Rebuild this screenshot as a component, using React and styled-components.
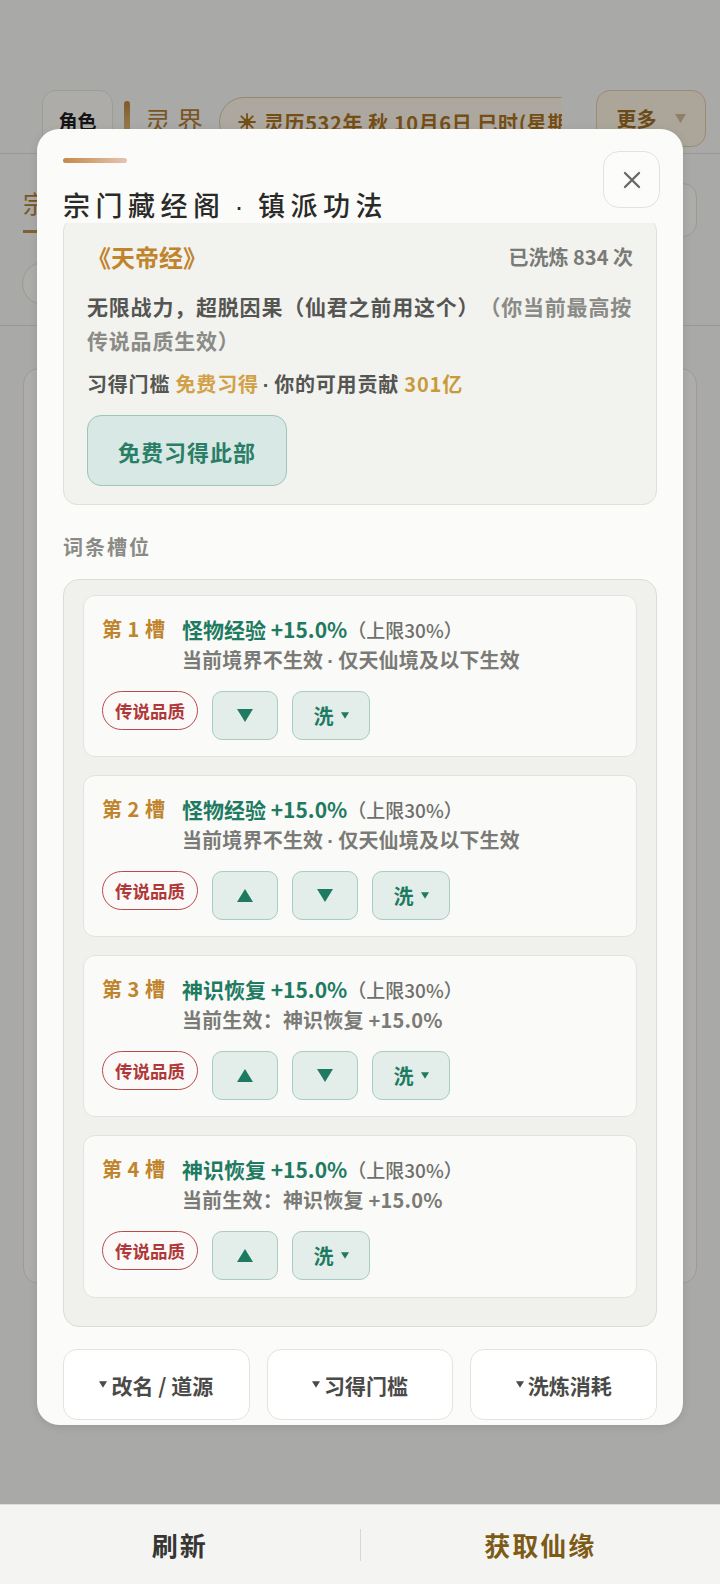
import React from "react";
import styled, { createGlobalStyle } from "styled-components";

const GlobalStyle = createGlobalStyle`
  html, body {
    margin: 0;
    padding: 0;
    background: #f2f2ef;
  }
  body {
    font-family: "Noto Sans CJK SC", "Noto Sans", sans-serif;
  }
  * {
    box-sizing: border-box;
  }
`;

const Page = styled.div`
  position: relative;
  height: 1584px;
  display: flex;
  flex-direction: column;
  overflow: hidden;
`;

/* ---------- page behind the dialog ---------- */

const TopBar = styled.div`
  height: 154px;
  display: flex;
  align-items: flex-start;
  padding: 90px 0 0 42px;
  border-bottom: 1px solid #dcdad4;
  flex-shrink: 0;
`;

const RoleButton = styled.div`
  width: 71px;
  height: 60px;
  border: 1px solid #e2e0da;
  border-radius: 14px;
  background: #f8f7f3;
  display: flex;
  align-items: center;
  justify-content: center;
  font-size: 19px;
  font-weight: 700;
  color: #1e1e1e;
`;

const GoldBar = styled.div`
  width: 6px;
  height: 40px;
  margin: 11px 0 0 11px;
  border-radius: 3px;
  background: linear-gradient(180deg, #b98238, #e4c48e);
`;

const RealmTitle = styled.div`
  margin: 14px 0 0 15px;
  font-size: 26px;
  line-height: 32px;
  letter-spacing: 6px;
  color: #b07a30;
`;

const DateClip = styled.div`
  width: 343px;
  margin: 7px 0 0 10px;
  overflow: hidden;
`;

const DatePill = styled.div`
  display: inline-flex;
  align-items: center;
  gap: 8px;
  height: 50px;
  padding: 0 22px 0 18px;
  border: 1.5px solid #d8c29c;
  border-radius: 26px;
  background: #f7f1e6;
  white-space: nowrap;
  font-size: 20px;
  font-weight: 700;
  letter-spacing: 0.6px;
  color: #a8701f;
`;

const MoreButton = styled.div`
  width: 110px;
  height: 57px;
  margin-left: 34px;
  border: 1.5px solid #dcc9a4;
  border-radius: 14px;
  background: #f6eedd;
  display: flex;
  align-items: center;
  justify-content: center;
  gap: 18px;
  font-size: 20px;
  font-weight: 700;
  color: #9a6a22;
`;

const TabRow = styled.div`
  height: 86px;
  display: flex;
  justify-content: space-between;
  align-items: flex-start;
  padding: 0 23px;
  flex-shrink: 0;
`;

const TabLabel = styled.div`
  margin-top: 32px;
  padding-bottom: 10px;
  font-size: 24px;
  line-height: 34px;
  color: #b07a30;
  border-bottom: 3px solid #b98a4a;
`;

const SearchBox = styled.div`
  width: 60px;
  height: 54px;
  margin-top: 29px;
  border: 1px solid #dedcd6;
  border-radius: 14px;
  background: #f7f6f2;
`;

const FilterRow = styled.div`
  height: 86px;
  padding: 22px 22px 0;
  border-bottom: 1px solid #dcdad4;
  flex-shrink: 0;
`;

const FilterPill = styled.div`
  width: 120px;
  height: 43px;
  border: 1px solid #dcdad4;
  border-radius: 22px;
  background: #f7f6f2;
`;

const BackCard = styled.div`
  height: 916px;
  margin: 42px 23px 0;
  border: 1px solid #e0ded8;
  border-radius: 16px;
  background: #f9f8f5;
  flex-shrink: 0;
`;

const Overlay = styled.div`
  position: absolute;
  top: 0;
  left: 0;
  right: 0;
  bottom: 80px;
  background: rgba(0, 0, 0, 0.3);
  z-index: 1;
`;

const BottomBar = styled.div`
  position: relative;
  z-index: 2;
  margin-top: auto;
  height: 80px;
  display: flex;
  align-items: center;
  background: #f4f5f3;
  border-top: 1px solid #deded9;
`;

const BarItem = styled.div`
  flex: 1;
  text-align: center;
  font-size: 26px;
  font-weight: 700;
  letter-spacing: 2px;
  color: ${(p) => (p.$accent ? "#7d5a16" : "#363634")};
`;

const BarDivider = styled.div`
  width: 1px;
  height: 32px;
  background: #d8d8d3;
`;

/* ---------- dialog ---------- */

const Modal = styled.div`
  position: absolute;
  z-index: 3;
  top: 129px;
  left: 37px;
  width: 646px;
  height: 1296px;
  display: flex;
  flex-direction: column;
  padding: 22px 26px 5px;
  background: #fbfbf9;
  border-radius: 22px;
  box-shadow: 0 2px 8px rgba(0, 0, 0, 0.1);
  overflow: hidden;
`;

const ModalHeader = styled.div`
  display: flex;
  justify-content: space-between;
  align-items: flex-start;
  flex-shrink: 0;
`;

const HeaderText = styled.div`
  padding-top: 7px;
`;

const Accent = styled.div`
  width: 64px;
  height: 5px;
  border-radius: 3px;
  background: linear-gradient(90deg, #c48a46, #e6c4b4);
`;

const Title = styled.div`
  margin-top: 24px;
  height: 36px;
  font-size: 27px;
  line-height: 36px;
  font-weight: 500;
  letter-spacing: 5.5px;
  color: #2a2a28;
`;

/* narrow latin middle dot used as a separator */
const Dot = styled.span`
  font-family: "Liberation Sans", sans-serif;
  line-height: 0;
  margin: 0 ${(p) => p.$gap || 4}px;
`;

const CloseButton = styled.div`
  width: 57px;
  height: 57px;
  margin-right: -3px;
  border: 1.5px solid #e2e2de;
  border-radius: 16px;
  background: #fcfcfa;
  display: flex;
  align-items: center;
  justify-content: center;
`;

const ModalBody = styled.div`
  flex: 1;
  overflow: hidden;
  display: flex;
  flex-direction: column;
`;

const InfoCard = styled.div`
  margin-top: -6px;
  padding: 24px 23px 18px;
  background: #f2f2ef;
  border: 1px solid #e0e0db;
  border-radius: 14px;
  flex-shrink: 0;
`;

const InfoHead = styled.div`
  display: flex;
  justify-content: space-between;
  align-items: center;
  height: 30px;
`;

const BookName = styled.div`
  font-size: 24px;
  line-height: 30px;
  font-weight: 700;
  color: #c0842c;
`;

const RefineCount = styled.div`
  font-size: 20px;
  line-height: 30px;
  font-weight: 700;
  color: #7a7a76;
`;

const Desc = styled.div`
  margin-top: 17px;
  font-size: 21px;
  line-height: 34px;
  font-weight: 700;
  letter-spacing: 0.8px;
  color: #555552;
  text-spacing-trim: space-all;
`;

const Muted = styled.span`
  color: #8a8a86;
`;

const Threshold = styled.div`
  margin-top: 12px;
  height: 30px;
  font-size: 20px;
  line-height: 30px;
  font-weight: 700;
  letter-spacing: 0.8px;
  color: #555552;
`;

const Gold = styled.span`
  color: ${(p) => p.$tone || "#d2a046"};
`;

const LearnButton = styled.div`
  margin-top: 16px;
  width: 200px;
  height: 71px;
  border: 1.5px solid #9cc6bc;
  border-radius: 14px;
  background: #d8e8e4;
  display: flex;
  align-items: center;
  justify-content: center;
  font-size: 22px;
  font-weight: 700;
  letter-spacing: 1px;
  color: #2a7e67;
`;

const SectionLabel = styled.div`
  margin-top: 27px;
  font-size: 20px;
  line-height: 30px;
  font-weight: 700;
  letter-spacing: 2px;
  color: #8a8a86;
  flex-shrink: 0;
`;

const SlotList = styled.div`
  margin-top: 17px;
  padding: 15px 19px 28px;
  display: flex;
  flex-direction: column;
  gap: 18px;
  background: #f0f0ed;
  border: 1px solid #dcdcd7;
  border-radius: 16px;
  flex-shrink: 0;
`;

const SlotCard = styled.div`
  height: ${(p) => p.$h}px;
  padding: 18px 18px 0;
  background: #fafaf8;
  border: 1px solid #e2e2de;
  border-radius: 12px;
`;

const SlotMain = styled.div`
  display: flex;
  gap: 17px;
`;

const SlotLabel = styled.div`
  font-size: 20px;
  line-height: 30px;
  font-weight: 700;
  word-spacing: 1px;
  color: #c0842c;
  white-space: nowrap;
`;

const SlotName = styled.div`
  font-size: 21px;
  line-height: 30px;
  font-weight: 700;
  color: #1f7a62;
  white-space: nowrap;
  text-spacing-trim: space-all;
`;

const SlotCap = styled.span`
  font-size: 19px;
  font-weight: 500;
  color: #6f6f6b;
`;

const SlotNote = styled.div`
  height: 30px;
  font-size: 20px;
  line-height: 30px;
  font-weight: 700;
  letter-spacing: 0.2px;
  color: #7a7a76;
  white-space: nowrap;
`;

const SlotActions = styled.div`
  margin-top: 16px;
  display: flex;
  align-items: flex-start;
  gap: 14px;
`;

const QualityBadge = styled.div`
  height: 39px;
  padding: 0 12px;
  display: flex;
  align-items: center;
  border: 1.5px solid #b84a4a;
  border-radius: 20px;
  background: #fcfaf9;
  font-size: 17.5px;
  font-weight: 700;
  color: #b03838;
`;

const ActionButton = styled.div`
  width: ${(p) => p.$w}px;
  height: 49px;
  display: flex;
  align-items: center;
  justify-content: center;
  gap: 7px;
  border: 1.5px solid #a9cbc3;
  border-radius: 10px;
  background: #e3eeeb;
  font-size: 20px;
  font-weight: 700;
  color: #1f7a62;
`;

const FootActions = styled.div`
  margin-top: 22px;
  display: grid;
  grid-template-columns: repeat(3, 1fr);
  gap: 17px;
  flex-shrink: 0;
`;

const FootButton = styled.div`
  height: 71px;
  display: flex;
  align-items: center;
  justify-content: center;
  gap: 4px;
  border: 1.5px solid #e3e3df;
  border-radius: 14px;
  background: #ffffff;
  font-size: 21px;
  font-weight: 700;
  color: #4a4a48;
`;

/* ---------- icons ---------- */

const Tri = ({ dir = "down", w = 16, h = 13, color = "#1f7a62" }) => (
  <svg width={w} height={h} viewBox="0 0 16 13">
    {dir === "down" ? (
      <polygon points="0,0 16,0 8,13" fill={color} />
    ) : (
      <polygon points="8,0 16,13 0,13" fill={color} />
    )}
  </svg>
);

const CloseIcon = () => (
  <svg width="18" height="18" viewBox="0 0 18 18">
    <path d="M2 2 L16 16 M16 2 L2 16" stroke="#6a6a66" strokeWidth="2.4" strokeLinecap="round" />
  </svg>
);

const SunIcon = () => (
  <svg width="18" height="18" viewBox="0 0 18 18">
    <g stroke="#a8701f" strokeWidth="1.8" strokeLinecap="round">
      <path d="M9 1 V17 M1 9 H17 M3.3 3.3 L14.7 14.7 M14.7 3.3 L3.3 14.7" />
    </g>
    <circle cx="9" cy="9" r="3.5" fill="#a8701f" />
  </svg>
);

const slots = [
  { n: 1, name: "怪物经验", note: ["当前境界不生效", "仅天仙境及以下生效"], up: false, down: true },
  { n: 2, name: "怪物经验", note: ["当前境界不生效", "仅天仙境及以下生效"], up: true, down: true },
  { n: 3, name: "神识恢复", note: ["当前生效：神识恢复 +15.0%"], up: true, down: true },
  { n: 4, name: "神识恢复", note: ["当前生效：神识恢复 +15.0%"], up: true, down: false },
];

const App = () => {
  return (
    <>
      <GlobalStyle />
      <Page>
        <TopBar>
          <RoleButton>角色</RoleButton>
          <GoldBar />
          <RealmTitle>灵界</RealmTitle>
          <DateClip>
            <DatePill>
              <SunIcon />
              灵历532年 秋 10月6日 巳时(星期三)
            </DatePill>
          </DateClip>
          <MoreButton>
            更多
            <Tri w={11} h={9} color="#cdb892" />
          </MoreButton>
        </TopBar>
        <TabRow>
          <TabLabel>宗门</TabLabel>
          <SearchBox />
        </TabRow>
        <FilterRow>
          <FilterPill />
        </FilterRow>
        <BackCard />

        <Overlay />

        <BottomBar>
          <BarItem>刷新</BarItem>
          <BarDivider />
          <BarItem $accent>获取仙缘</BarItem>
        </BottomBar>

        <Modal role="dialog">
          <ModalHeader>
            <HeaderText>
              <Accent />
              <Title>
                宗门藏经阁<Dot $gap={9}>·</Dot>镇派功法
              </Title>
            </HeaderText>
            <CloseButton>
              <CloseIcon />
            </CloseButton>
          </ModalHeader>

          <ModalBody>
            <InfoCard>
              <InfoHead>
                <BookName>《天帝经》</BookName>
                <RefineCount>已洗炼 834 次</RefineCount>
              </InfoHead>
              <Desc>
                无限战力，超脱因果（仙君之前用这个）<Muted>（你当前最高按传说品质生效）</Muted>
              </Desc>
              <Threshold>
                习得门槛 <Gold>免费习得</Gold>
                <Dot>·</Dot>你的可用贡献 <Gold $tone="#c99a3a">301亿</Gold>
              </Threshold>
              <LearnButton>免费习得此部</LearnButton>
            </InfoCard>

            <SectionLabel>词条槽位</SectionLabel>

            <SlotList>
              {slots.map((s) => (
                <SlotCard key={s.n} $h={s.n === 4 ? 163 : 162}>
                  <SlotMain>
                    <SlotLabel>第 {s.n} 槽</SlotLabel>
                    <div>
                      <SlotName>
                        {s.name} +15.0%<SlotCap>（上限30%）</SlotCap>
                      </SlotName>
                      <SlotNote>
                        {s.note[0]}
                        {s.note[1] && (
                          <>
                            <Dot>·</Dot>
                            {s.note[1]}
                          </>
                        )}
                      </SlotNote>
                    </div>
                  </SlotMain>
                  <SlotActions>
                    <QualityBadge>传说品质</QualityBadge>
                    {s.up && (
                      <ActionButton $w={66}>
                        <Tri dir="up" />
                      </ActionButton>
                    )}
                    {s.down && (
                      <ActionButton $w={66}>
                        <Tri dir="down" />
                      </ActionButton>
                    )}
                    <ActionButton $w={78}>
                      洗
                      <Tri w={8} h={7} />
                    </ActionButton>
                  </SlotActions>
                </SlotCard>
              ))}
            </SlotList>

            <FootActions>
              <FootButton>
                <Tri w={8} h={7} color="#4a4a48" />
                改名 / 道源
              </FootButton>
              <FootButton>
                <Tri w={8} h={7} color="#4a4a48" />
                习得门槛
              </FootButton>
              <FootButton>
                <Tri w={8} h={7} color="#4a4a48" />
                洗炼消耗
              </FootButton>
            </FootActions>
          </ModalBody>
        </Modal>
      </Page>
    </>
  );
};

export default App;
